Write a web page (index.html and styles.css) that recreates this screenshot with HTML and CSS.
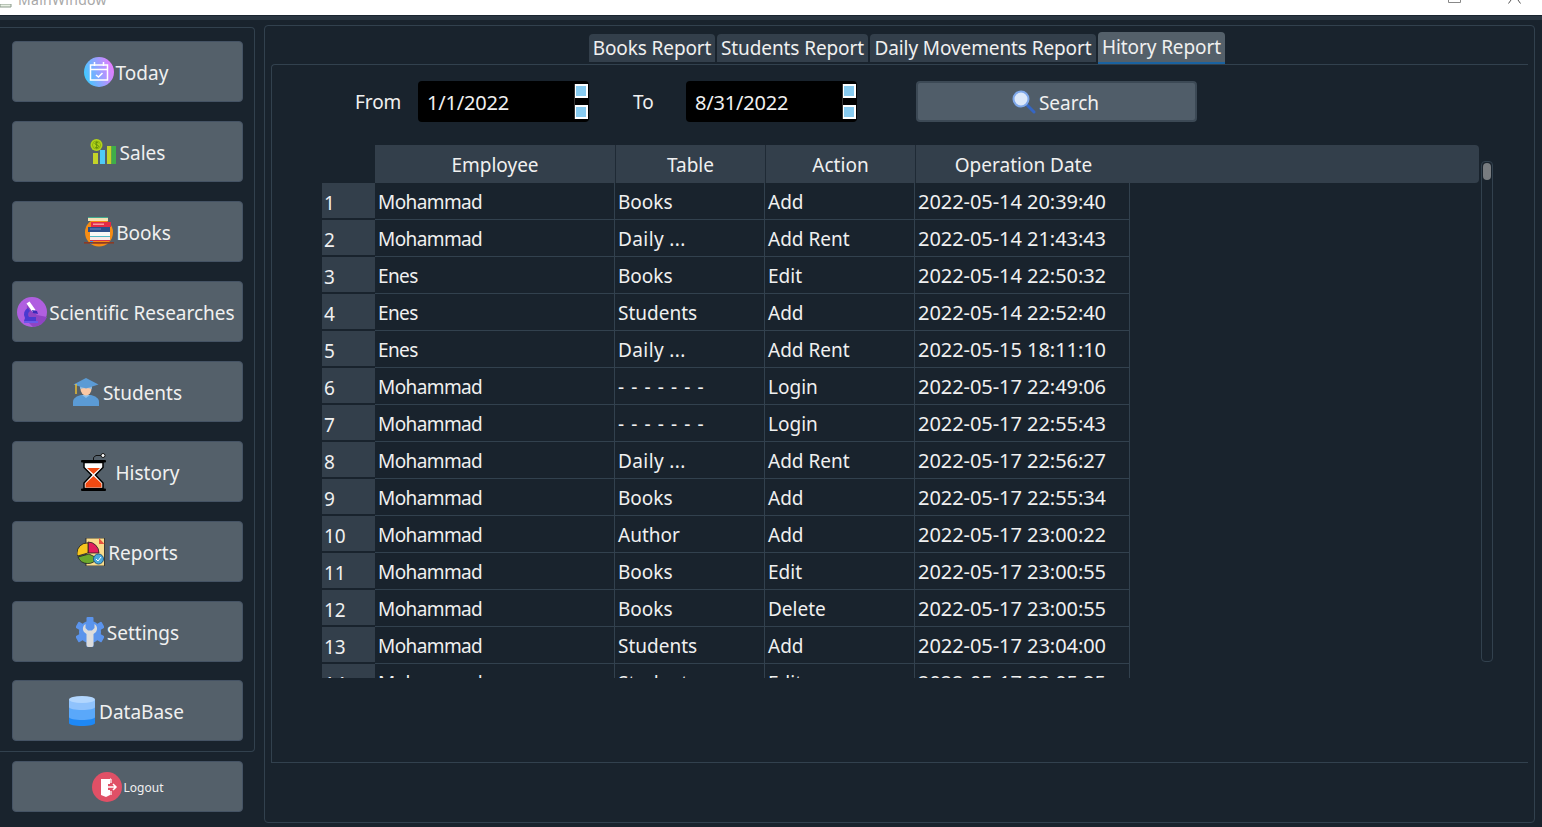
FILE: index.html
```html
<!DOCTYPE html>
<html lang="en">
<head>
    <meta charset="UTF-8">
    <title>MainWindow</title>
    <link rel="stylesheet" href="styles.css">
</head>
<body>
    <div class="titlebar">
        <svg class="title-icon" width="12" height="4" viewBox="0 0 12 4"><path d="M0 0h11v3H0z" fill="#e8f0e4" stroke="#8a9a8a"/></svg>
        <span class="title-text">MainWindow</span>
        <svg class="win-btns" width="73" height="5" viewBox="0 0 73 5"><path d="M.5 0v2.500h12V0" fill="none" stroke="#888"/><path d="M60.500 3.500L63 0M72.500 3.500L70 0" fill="none" stroke="#555"/></svg>
    </div>
    <div class="strip"></div>

    <div class="app">
        <div class="side">
            <div class="side-panel">
                <button class="nav-btn shift-l">
                    <svg width="30" height="30" viewBox="0 0 30 30"><defs><linearGradient id="gToday" x1="0" x2="1" y1="0.6" y2="0.3"><stop offset="0" stop-color="#3fcaff"/><stop offset="1" stop-color="#ec79ff"/></linearGradient></defs><circle cx="15" cy="15" r="15" fill="url(#gToday)"/><path d="M6.500 8h17v15h-17zM6.500 12.500h17M10.500 5v4M19.500 5v4" fill="none" stroke="#fff" stroke-width="1.500"/><path d="M12 18l2.500 2 4-4" fill="none" stroke="#fff" stroke-width="1.600"/></svg>
                    <span>Today</span>
                </button>
                <button class="nav-btn gap-4">
                    <svg width="26" height="25" viewBox="0 0 26 25"><rect x="3" y="14" width="5" height="11" fill="#c4d429"/><rect x="10" y="11" width="5" height="14" fill="#4fcbf7"/><rect x="17" y="7" width="4.500" height="18" fill="#c4d429"/><rect x="21.500" y="7" width="4.500" height="18" fill="#3fae49"/><circle cx="6.500" cy="6" r="6" fill="#b2d41a"/><circle cx="6.500" cy="6" r="4" fill="none" stroke="#8fb00f"/><path d="M8.500 4C7.500 3 4.800 3.200 5 4.800c.2 1.500 3.600.8 3.700 2.500C8.800 9 5.800 9 4.800 8M6.700 2.300v7.500" fill="none" stroke="#5f8a0a" stroke-width=".9"/></svg>
                    <span>Sales</span>
                </button>
                <button class="nav-btn">
                    <svg width="30" height="30" viewBox="0 0 30 30"><circle cx="15" cy="15.500" r="14" fill="#f78d14"/><path d="M6 25a10 4 0 0 0 18 0z" fill="#c4682c"/><rect x="4" y="0" width="20" height="4" fill="#f4e0b4"/><rect x="4" y="0" width="20" height="1" fill="#3fa88e"/><rect x="7" y="5" width="20" height="5" fill="#e32a46"/><rect x="9" y="6.500" width="11" height="1.500" fill="#f59aa2"/><rect x="4" y="10" width="22" height="5" fill="#2b4f8c"/><rect x="6" y="11.500" width="11" height="1" fill="#6b8ac0"/><rect x="6" y="15" width="20" height="4" fill="#f7f7f7"/><rect x="6" y="19" width="20" height="1" fill="#4db8c8"/><rect x="6" y="20" width="20" height="4" fill="#f7e8e8"/><rect x="6" y="23" width="20" height="1" fill="#d8364a"/><rect x="6" y="24" width="3" height="3" fill="#3a9ae0"/><rect x="0" y="25" width="30" height="1.600" fill="#8c3a24"/></svg>
                    <span>Books</span>
                </button>
                <button class="nav-btn shift-l">
                    <svg width="30" height="30" viewBox="0 0 30 30"><circle cx="15" cy="15" r="15" fill="#b05fe0"/><path d="M10 8l10 10 10 2a15 15 0 0 1-14 10l-7-7z" fill="#8f44c4"/><path d="M8 21a7 7 0 0 1 3-10l2 3a4 4 0 0 0-1 6h7v4H7z" fill="#4a3ad0"/><path d="M7 24h14v2H7z" fill="#6a58e8"/><path d="M9.500 6.500l3-2 6 8.500-3 2z" fill="#fff"/><path d="M15 13l5 1 1 3-5-1z" fill="#3b2bb8"/></svg>
                    <span>Scientific Researches</span>
                </button>
                <button class="nav-btn gap-4">
                    <svg width="26" height="28" viewBox="0 0 26 28"><path d="M0 28v-4c0-4 4-6 8-7h10c4 1 8 3 8 7v4z" fill="#5b9bd5"/><path d="M9 17l4 3 4-3z" fill="#8cc0ea"/><ellipse cx="13" cy="11" rx="5.500" ry="6.500" fill="#fbc8a4"/><path d="M7 8l6 2 6-2v3c-4-1.500-8-1.500-12 0z" fill="#8cb8dc"/><path d="M13 0l12.500 6.500L13 10.500.5 6.500z" fill="#5b9bd5"/><path d="M3 6v10" stroke="#f4c430" stroke-width="1.400"/></svg>
                    <span>Students</span>
                </button>
                <button class="nav-btn gap-10 shift-r">
                    <svg width="25" height="38" viewBox="0 0 25 38"><path d="M12.500 8V4.500L15 2.500h7" fill="none" stroke="#111" stroke-width="1"/><circle cx="22" cy="2.500" r="2" fill="#fff" stroke="#111"/><rect y="7" width="25" height="2.500" rx="1" fill="#000"/><rect y="35.500" width="25" height="2.500" rx="1" fill="#000"/><path d="M3 9.500h19v5L14.500 22l7.500 8v5.500H3V30l7.500-8L3 14.500z" fill="#fff" stroke="#000" stroke-width="1.500"/><path d="M6 15h13l-6.500 6zM4.500 34.500v-4l8-7.500 8 7.500v4z" fill="#f04a12"/></svg>
                    <span>History</span>
                </button>
                <button class="nav-btn gap-3">
                    <svg width="28" height="28" viewBox="0 0 28 28"><rect x="9" y="0" width="18.500" height="28" fill="#f9dc8c" stroke="#222" stroke-width=".8"/><path d="M22 0l5.500 6H22z" fill="#e8553e"/><path d="M22 15A11 11 0 0 0 11 4v11z" fill="#e21f5c" stroke="#222" stroke-width=".8"/><path d="M10 5A10 10 0 0 0 0 15c0 1 0 2 .5 3L11 15V5z" fill="#f7c61e" stroke="#222" stroke-width=".8"/><path d="M1 19a10.500 10.500 0 0 0 19 1l-8-4z" fill="#6aa82c" stroke="#222" stroke-width=".8"/><circle cx="21.500" cy="21" r="5" fill="#4aa8dc" stroke="#1b5a86"/><path d="M19 21l2 2 3-4" fill="none" stroke="#fff"/></svg>
                    <span>Reports</span>
                </button>
                <button class="nav-btn gap-3">
                    <svg width="28" height="30" viewBox="0 0 28 30"><g fill="#5b94ec"><circle cx="14" cy="15" r="11"/><rect x="10.500" y="0" width="7" height="30" rx="1"/><rect x="10.500" y="0" width="7" height="30" rx="1" transform="rotate(60 14 15)"/><rect x="10.500" y="0" width="7" height="30" rx="1" transform="rotate(120 14 15)"/></g><path d="M9.500 7v4l2.500 2.500h4L18.500 11V7c2.500 1.500 3.500 5 1.500 8l-2.500 2v11a2 2 0 0 1-2 2h-3a2 2 0 0 1-2-2V17L8 15C6 12 7 8.500 9.500 7z" fill="#dcdcdc"/></svg>
                    <span>Settings</span>
                </button>
                <button class="nav-btn gap-4 nav-last">
                    <svg width="26" height="30" viewBox="0 0 26 30"><path d="M0 21h26v6c0 2-6 3-13 3S0 29 0 27z" fill="#1e88f5"/><path d="M0 11h26v10c0 2-6 3-13 3S0 23 0 21z" fill="#5aa8fa"/><path d="M0 4h26v7c0 2-6 3-13 3S0 13 0 11z" fill="#8fc2fc"/><ellipse cx="13" cy="3.500" rx="13" ry="3.500" fill="#b2d6fe"/></svg>
                    <span>DataBase</span>
                </button>
            </div>
            <button class="nav-btn logout">
                <svg width="30" height="30" viewBox="0 0 30 30"><circle cx="15" cy="15" r="15" fill="#e05066"/><path d="M9 7h9v5h-2v6h2v5l-4 2-5-2z" fill="#fff"/><path d="M19 7v4M19 19v4M18 7h1" stroke="#fff" stroke-width="1.200"/><path d="M15 15h9M21 12l3 3-3 3" fill="none" stroke="#fff" stroke-width="1.500"/></svg>
                <span>Logout</span>
            </button>
        </div>

        <div class="main-panel">
            <div class="tabs">
                <div class="tab">Books Report</div>
                <div class="tab">Students Report</div>
                <div class="tab">Daily Movements Report</div>
                <div class="tab active">Hitory Report</div>
            </div>
            <div class="pane">
                <div class="filters">
                    <label class="lbl-from">From</label>
                    <div class="date-edit">
                        <span>1/1/2022</span>
                        <div class="spin"><i></i><i></i></div>
                    </div>
                    <label class="lbl-to">To</label>
                    <div class="date-edit">
                        <span>8/31/2022</span>
                        <div class="spin"><i></i><i></i></div>
                    </div>
                    <button class="search-btn">
                        <svg width="24" height="24" viewBox="0 0 24 24"><path d="M14 14l8 8" stroke="#3566c4" stroke-width="3" stroke-linecap="round"/><circle cx="9" cy="9" r="7.500" fill="#dce8fa" stroke="#7fa8ea" stroke-width="2"/></svg>
                        <span>Search</span>
                    </button>
                </div>
                <div class="table-area">
                    <div class="table-wrap">
                        <div class="head">
                            <div class="hcell hcell-first">Employee</div>
                            <div class="hcell">Table</div>
                            <div class="hcell">Action</div>
                            <div class="hcell hcell-last">Operation Date</div>
                        </div>
                        <table class="grid">
                            <tr><th>1</th><td>Mohammad</td><td>Books</td><td>Add</td><td class="date">2022-05-14 20:39:40</td></tr>
                            <tr><th>2</th><td>Mohammad</td><td class="trunc">Daily ...</td><td>Add Rent</td><td class="date">2022-05-14 21:43:43</td></tr>
                            <tr><th>3</th><td>Enes</td><td>Books</td><td>Edit</td><td class="date">2022-05-14 22:50:32</td></tr>
                            <tr><th>4</th><td>Enes</td><td>Students</td><td>Add</td><td class="date">2022-05-14 22:52:40</td></tr>
                            <tr><th>5</th><td>Enes</td><td class="trunc">Daily ...</td><td>Add Rent</td><td class="date">2022-05-15 18:11:10</td></tr>
                            <tr><th>6</th><td>Mohammad</td><td class="dash">- - - - - - -</td><td>Login</td><td class="date">2022-05-17 22:49:06</td></tr>
                            <tr><th>7</th><td>Mohammad</td><td class="dash">- - - - - - -</td><td>Login</td><td class="date">2022-05-17 22:55:43</td></tr>
                            <tr><th>8</th><td>Mohammad</td><td class="trunc">Daily ...</td><td>Add Rent</td><td class="date">2022-05-17 22:56:27</td></tr>
                            <tr><th>9</th><td>Mohammad</td><td>Books</td><td>Add</td><td class="date">2022-05-17 22:55:34</td></tr>
                            <tr><th>10</th><td>Mohammad</td><td>Author</td><td>Add</td><td class="date">2022-05-17 23:00:22</td></tr>
                            <tr><th>11</th><td>Mohammad</td><td>Books</td><td>Edit</td><td class="date">2022-05-17 23:00:55</td></tr>
                            <tr><th>12</th><td>Mohammad</td><td>Books</td><td>Delete</td><td class="date">2022-05-17 23:00:55</td></tr>
                            <tr><th>13</th><td>Mohammad</td><td>Students</td><td>Add</td><td class="date">2022-05-17 23:04:00</td></tr>
                            <tr><th>14</th><td>Mohammad</td><td>Students</td><td>Edit</td><td class="date">2022-05-17 23:05:25</td></tr>
                        </table>
                    </div>
                    <div class="scrollbar"><div class="thumb"></div></div>
                </div>
            </div>
        </div>
    </div>
</body>
</html>
```

FILE: styles.css
```css
html, body {
    margin: 0;
    height: 827px;
    overflow: hidden;
}
body {
    background: #19232d;
    color: #f0f0f0;
    font-family: "Noto Sans", sans-serif;
    font-size: 19px;
}
.titlebar {
    height: 15px;
    background: #fff;
    display: flex;
    align-items: flex-end;
    overflow: hidden;
}
.title-icon {
    margin-bottom: 7px;
    flex: none;
}
.title-text {
    margin: 0 0 5px 6px;
    color: #a8a8a8;
    font-size: 14px;
    letter-spacing: 0.3px;
    line-height: 20px;
    flex: none;
}
.win-btns {
    margin: 0 21px 10px auto;
    flex: none;
}
.strip {
    height: 5px;
    background: #2a3641;
    border-top: 1px solid #1a2530;
    box-sizing: border-box;
}
.app {
    display: flex;
}

/* left menu */
.side {
    width: 255px;
    margin-top: 7px;
    flex: none;
}
.side-panel {
    box-sizing: border-box;
    height: 725px;
    padding: 13px 0 0 12px;
    border: 1px solid #32414e;
    border-left: none;
    border-radius: 0 4px 4px 0;
    display: flex;
    flex-direction: column;
    gap: 19px;
}
.nav-btn {
    box-sizing: border-box;
    width: 231px;
    height: 61px;
    flex: none;
    padding: 0;
    background: #54606a;
    border: 1px solid #455364;
    border-radius: 4px;
    color: #f0f0f0;
    font: inherit;
    display: flex;
    align-items: center;
    justify-content: center;
    gap: 2px;
}
.nav-btn span {
    margin-top: 2px;
}
.gap-3 { gap: 3px; }
.gap-4 { gap: 4px; }
.gap-10 { gap: 10px; }
.shift-l { padding-right: 3px; }
.shift-r { padding-left: 5px; }
.nav-last { margin-top: -1px; padding-right: 2px; }
.logout {
    height: 51px;
    margin: 9px 0 0 12px;
    font-size: 12px;
}

/* report area */
.main-panel {
    box-sizing: border-box;
    width: 1271px;
    height: 798px;
    margin: 5px 0 0 9px;
    padding: 6px 6px 0;
    border: 1px solid #32414e;
    border-radius: 4px;
    flex: none;
}
.tabs {
    display: grid;
    grid-template-columns: 126px 151px 226px 127px;
    gap: 2px;
    height: 32px;
    margin-left: 318px;
    align-items: center;
}
.tab {
    height: 28px;
    line-height: 28px;
    text-align: center;
    background: #333f4b;
    border-radius: 4px 4px 0 0;
    white-space: nowrap;
    letter-spacing: -0.1px;
}
.tab.active {
    box-sizing: border-box;
    height: 32px;
    line-height: 30px;
    background: #54606a;
    border-bottom: 2px solid #1a62a0;
}
.pane {
    box-sizing: border-box;
    height: 699px;
    border: 1px solid #32414e;
    border-right: none;
    border-radius: 4px 0 0 0;
    padding-top: 16px;
}
.filters {
    display: flex;
    align-items: center;
    height: 41px;
    padding-left: 83px;
}
.lbl-from {
    width: 63px;
    padding-top: 1px;
    letter-spacing: -0.1px;
}
.lbl-to {
    box-sizing: border-box;
    width: 97px;
    padding: 1px 0 0 44px;
}
.date-edit {
    box-sizing: border-box;
    width: 171px;
    height: 41px;
    padding: 0 1px 0 9px;
    background: #000;
    border-radius: 4px;
    display: flex;
    align-items: center;
    justify-content: space-between;
    font-size: 20px;
    letter-spacing: -0.2px;
}
.date-edit span {
    padding-top: 1px;
}
.spin {
    height: 35px;
    display: flex;
    flex-direction: column;
    justify-content: space-between;
    border-left: 1px solid #333;
}
.spin i {
    display: block;
    box-sizing: border-box;
    width: 13px;
    height: 14px;
    background: #88cbf0;
    border: 2px solid #fff;
    border-left-width: 1px;
}
.search-btn {
    box-sizing: border-box;
    width: 281px;
    height: 41px;
    margin-left: 59px;
    padding: 0 2px 0 0;
    background: #505d69;
    border: 2px solid #3c4955;
    border-radius: 4px;
    color: #f0f0f0;
    font: inherit;
    display: flex;
    align-items: center;
    justify-content: center;
    gap: 3px;
}
.search-btn span {
    padding-top: 2px;
}

/* table */
.table-area {
    display: flex;
    margin: 23px 0 0 50px;
}
.table-wrap {
    width: 1157px;
    height: 533px;
    overflow: hidden;
    flex: none;
}
.head {
    height: 38px;
    margin-left: 53px;
    display: flex;
    background: #333f4b;
    border-radius: 0 4px 4px 0;
}
.hcell {
    box-sizing: border-box;
    width: 150px;
    height: 38px;
    line-height: 40px;
    text-align: center;
    border-right: 1px solid #1f2a35;
}
.hcell-first {
    width: 241px;
}
.hcell-last {
    width: 215px;
    border-right: none;
}
.grid {
    border-collapse: separate;
    border-spacing: 0;
    table-layout: fixed;
    width: 808px;
}
.grid th {
    box-sizing: border-box;
    width: 53px;
    height: 37px;
    padding: 4px 0 0 2px;
    background: #333f4b;
    border-bottom: 2px solid #19232d;
    font-weight: normal;
    text-align: left;
}
.grid td {
    box-sizing: border-box;
    width: 150px;
    height: 37px;
    padding: 2px 0 0 3px;
    border-bottom: 1px solid #32414e;
    border-right: 1px solid #32414e;
    white-space: nowrap;
}
.grid td:nth-child(2) {
    width: 240px;
    letter-spacing: -0.6px;
}
.grid td.trunc {
    letter-spacing: 0.4px;
}
.grid td.dash {
    letter-spacing: 1.1px;
}
.grid td.date {
    width: 215px;
    padding-top: 0;
    font-size: 20px;
    letter-spacing: -0.05px;
}
.scrollbar {
    box-sizing: border-box;
    width: 12px;
    height: 501px;
    margin: 16px 0 0 2px;
    padding: 1px;
    border: 1px solid #32414e;
    border-radius: 4px;
}
.thumb {
    height: 17px;
    background: #787c80;
    border-radius: 4px;
}
```
